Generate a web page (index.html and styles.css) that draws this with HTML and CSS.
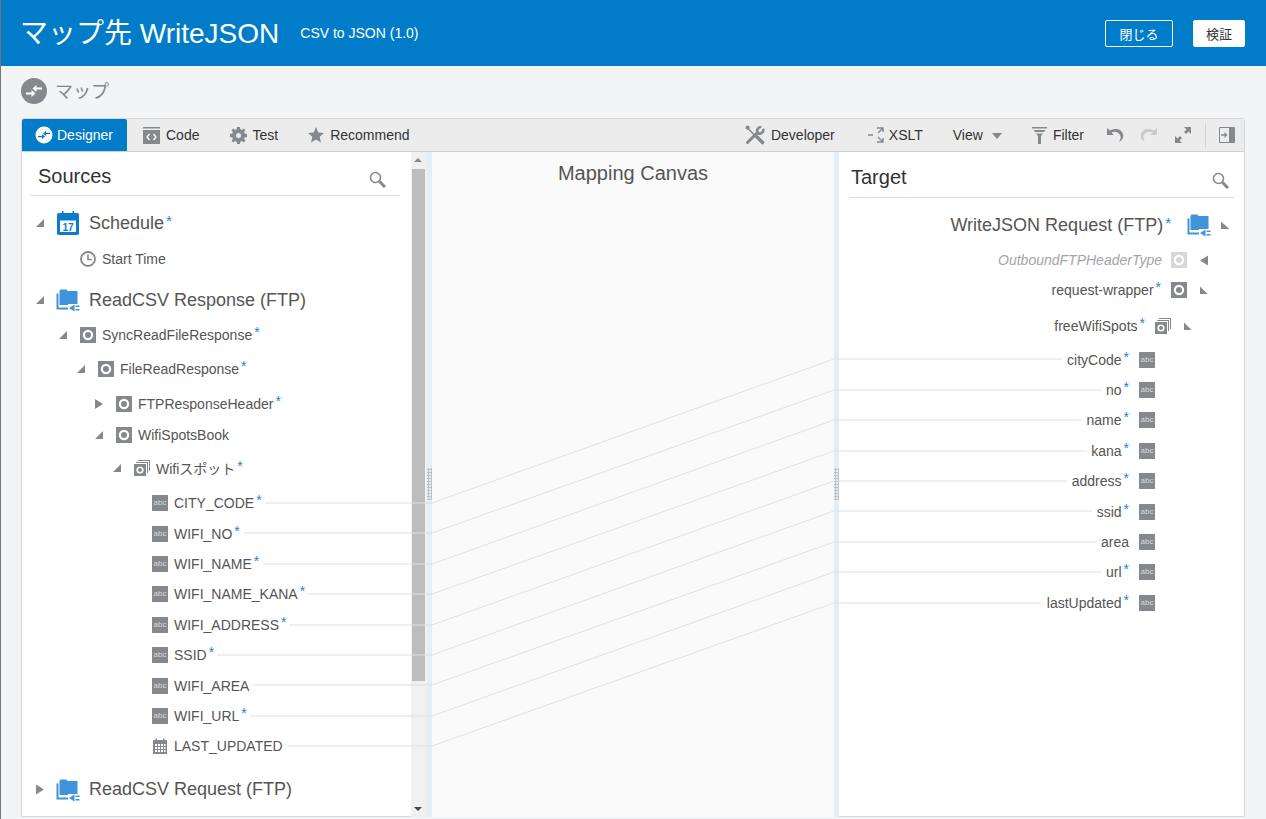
FILE: index.html
```html
<!DOCTYPE html>
<html lang="ja">
  <head>
    <meta charset="UTF-8" />
    <meta name="viewport" content="width=device-width, initial-scale=1.0" />
    <title>マップ先 WriteJSON</title>
    <link rel="stylesheet" href="styles.css">
  </head>
  <body>
    <!-- icon sprites -->
    <svg class="sprites" width="0" height="0">
      <symbol id="i-obj" viewBox="0 0 16 16"><path fill-rule="evenodd" d="M0 0h16v16H0zM8 2.800a5.200 5.200 0 1 0 0 10.400A5.200 5.200 0 0 0 8 2.800zM8 5a3 3 0 1 1 0 6 3 3 0 0 1 0-6z"/></symbol>
      <symbol id="i-coll" viewBox="0 0 16 16"><path fill-rule="evenodd" d="M0 4h12v12H0zM6 6.400a3.600 3.600 0 1 0 0 7.200 3.600 3.600 0 0 0 0-7.200zM6 8a2 2 0 1 1 0 4 2 2 0 0 1 0-4z"/><path d="M2 2h12v11h-1V3H2zM4 0h12v11h-1V1H4z"/></symbol>
      <symbol id="i-folder" viewBox="0 0 24 24"><path fill="#3f94da" d="M3.500 3 4.500 1.500h6L11.500 3H21.500v14H3.500z"/><path fill="none" stroke="#3f94da" stroke-width="2" d="M1.500 5.500V20.500H13"/><path fill="#fff" d="M12 16h12v8H12z"/><path fill="#3f94da" d="M13 20 18.500 16.500v7zM19.500 17.500h4V19h-4zM19.500 21h4v1.500h-4z"/></symbol>
    </svg>

    <header class="app-bar">
      <h1>マップ先 WriteJSON</h1>
      <span class="app-sub">CSV to JSON (1.0)</span>
      <div class="app-actions">
        <button class="btn-line">閉じる</button>
        <button class="btn-solid">検証</button>
      </div>
    </header>

    <div class="crumb">
      <svg class="crumb-icon" viewBox="0 0 26 26"><circle cx="13" cy="13" r="13" fill="#85888c"/><path fill="#fff" d="M5 14.500h5.500V12l4 3.500-4 3.500v-2.500H5zM21 9.500h-5.500V7l-4 3.500 4 3.500v-2.500H21z"/></svg>
      <span class="crumb-label">マップ</span>
    </div>

    <section class="mapper">
      <nav class="toolbar">
        <a class="tool tab-active">
          <svg class="ic" width="18" height="18" viewBox="0 0 18 18"><circle cx="9" cy="9" r="8.500" fill="#fff"/><path fill="#007cc7" d="M3 10h4V8l3 2.500L7 13v-1.800H3zM15 8h-4v2L8 7.500 11 5v1.800h4z"/></svg>
          Designer
        </a>
        <a class="tool">
          <svg class="ic" width="17" height="17" viewBox="0 0 17 17"><path fill="#85888c" d="M0 0h17v1.500H0zM0 3h17v14H0z"/><path fill="none" stroke="#fff" stroke-width="1.300" d="M6.500 7 4 10l2.500 3M10.500 7 13 10l-2.500 3"/></svg>
          Code
        </a>
        <a class="tool tool-test">
          <svg class="ic" width="17" height="17" viewBox="0 0 17 17"><path fill-rule="evenodd" fill="#85888c" d="M7 0h3l.4 2.300 1.500.6L13.800 1.500 15.500 3.200 14.100 5.100l.6 1.500L17 7v3l-2.300.4-.6 1.500 1.400 1.900-1.700 1.700-1.900-1.400-1.500.6L10 17H7l-.4-2.300-1.500-.6-1.900 1.400-1.700-1.700 1.400-1.900-.6-1.500L0 10V7l2.300-.4.6-1.500L1.500 3.200 3.200 1.500 5.100 2.900l1.500-.6zM8.500 6a2.500 2.500 0 1 0 0 5 2.500 2.500 0 0 0 0-5z"/></svg>
          Test
        </a>
        <a class="tool">
          <svg class="ic" width="16" height="16" viewBox="0 0 16 16"><path fill="#85888c" d="m8 0 2.300 5.500 5.700.5-4.300 3.800 1.300 5.700L8 12.500l-5 3 1.300-5.700L0 6l5.700-.5z"/></svg>
          Recommend
        </a>
        <div class="tool-spacer"></div>
        <a class="tool tool-dev">
          <svg class="ic" width="20" height="20" viewBox="0 0 20 20"><path fill="none" stroke="#85888c" stroke-width="1.500" d="M2 2.500 11 11.500"/><path fill="#85888c" d="M1 1 3.500.5 5 3 3 5 .5 3.500z"/><path fill="none" stroke="#85888c" stroke-width="3.600" stroke-linecap="round" d="M12 12 17.500 17.500"/><path fill="none" stroke="#85888c" stroke-width="3" stroke-linecap="round" d="M12.500 7.500 2.500 17.500"/><path fill="none" stroke="#85888c" stroke-width="2.600" d="M18.300 3.800a3.900 3.900 0 0 1-5.400 4.400M12.900 8.200A3.900 3.900 0 0 1 16.300 2"/></svg>
          Developer
        </a>
        <a class="tool tool-xslt">
          <svg class="ic" width="17" height="18" viewBox="0 0 17 18"><path fill="none" stroke="#85888c" stroke-width="1.400" d="M0 9h5M9 2h6v4M15 2l-5 5M9 16h6v-4M15 16l-5-5"/></svg>
          XSLT
        </a>
        <a class="tool tool-view">View <i class="caret"></i></a>
        <a class="tool tool-filter">
          <svg class="ic" width="15" height="17" viewBox="0 0 15 17"><path fill="#85888c" d="M0 0h15v1.500H0zM1.500 3h12L12 5H3zM4 6.500h7L9 9v8H6V9z"/></svg>
          Filter
        </a>
        <svg class="tool-ic undo" width="17" height="14" viewBox="0 0 17 14"><path fill="#85888c" d="M0 0v7h7L4.500 4.500C7 3 12 3.500 13.500 8c.5 2-.5 4-1.500 6 3-1.500 5-4.500 4-8C14.500 1 8.500-.5 3 2.500z"/></svg>
        <svg class="tool-ic redo" width="17" height="14" viewBox="0 0 17 14"><path fill="#c9cbcd" d="M17 0v7h-7l2.500-2.500C10 3 5 3.500 3.500 8c-.5 2 .5 4 1.500 6-3-1.500-5-4.500-4-8C2.500 1 8.500-.5 14 2.500z"/></svg>
        <svg class="tool-ic expand" width="16" height="16" viewBox="0 0 16 16"><path fill="#85888c" d="M9 0h7v7l-2.500-2.500L11 7 9 5l2.500-2.500zM7 16H0V9l2.500 2.500L5 9l2 2-2.500 2.500z"/></svg>
        <div class="tool-sep"></div>
        <svg class="tool-ic panel-ic" width="16" height="16" viewBox="0 0 16 16"><path fill="none" stroke="#85888c" d="M.5.5h15v15H.500z"/><path fill="#85888c" d="M10 1h5v14h-5zM2 7.300h3.500V5l3 3-3 3V8.700H2z"/></svg>
      </nav>

      <div class="mapper-body">
        <div class="sources">
          <div class="pane-head">
            <h2>Sources</h2>
            <svg class="search" width="17" height="17" viewBox="0 0 17 17"><circle cx="6.500" cy="6.500" r="5" fill="none" stroke="#85888c" stroke-width="1.600"/><path stroke="#85888c" stroke-width="3" d="m10.500 10.500 5.500 5.500"/></svg>
          </div>
          <div class="tree">
            <div class="row root d0">
              <i class="tw open"></i>
              <svg class="ic-root" viewBox="0 0 24 24"><path fill="#0a7bd0" d="M3 2h3V0h1.500v2h9V0H18v2h3a2 2 0 0 1 2 2v18a2 2 0 0 1-2 2H3a2 2 0 0 1-2-2V4a2 2 0 0 1 2-2z"/><path fill="#fff" d="M4 9.500h16V21H4z"/><text x="12" y="19.500" class="cal-num">17</text></svg>
              <span class="label">Schedule<sup>*</sup></span>
            </div>
            <div class="row d1 gap-6">
              <svg class="ic" viewBox="0 0 16 16"><circle cx="8" cy="8" r="7" fill="none" stroke="#85888c" stroke-width="1.800"/><path fill="none" stroke="#85888c" stroke-width="1.600" d="M8 3.500V8.500h4"/></svg>
              <span class="label">Start Time</span>
            </div>
            <div class="row root d0 gap-11">
              <i class="tw open"></i>
              <svg class="ic-root"><use href="#i-folder"/></svg>
              <span class="label">ReadCSV Response (FTP)</span>
            </div>
            <div class="row d1 gap-5">
              <i class="tw open"></i>
              <svg class="ic"><use href="#i-obj"/></svg>
              <span class="label">SyncReadFileResponse<sup>*</sup></span>
            </div>
            <div class="row d2 gap-4">
              <i class="tw open"></i>
              <svg class="ic"><use href="#i-obj"/></svg>
              <span class="label">FileReadResponse<sup>*</sup></span>
            </div>
            <div class="row d3 gap-5">
              <i class="tw closed"></i>
              <svg class="ic"><use href="#i-obj"/></svg>
              <span class="label">FTPResponseHeader<sup>*</sup></span>
            </div>
            <div class="row d3 gap-1">
              <i class="tw open"></i>
              <svg class="ic"><use href="#i-obj"/></svg>
              <span class="label">WifiSpotsBook</span>
            </div>
            <div class="row d4 gap-3">
              <i class="tw open"></i>
              <svg class="ic"><use href="#i-coll"/></svg>
              <span class="label">Wifiスポット<sup>*</sup></span>
            </div>
            <div class="row field d5 gap-5"><i class="abc">abc</i><span class="label">CITY_CODE<sup>*</sup></span></div>
            <div class="row field d5"><i class="abc">abc</i><span class="label">WIFI_NO<sup>*</sup></span></div>
            <div class="row field d5"><i class="abc">abc</i><span class="label">WIFI_NAME<sup>*</sup></span></div>
            <div class="row field d5"><i class="abc">abc</i><span class="label">WIFI_NAME_KANA<sup>*</sup></span></div>
            <div class="row field d5"><i class="abc">abc</i><span class="label">WIFI_ADDRESS<sup>*</sup></span></div>
            <div class="row field d5"><i class="abc">abc</i><span class="label">SSID<sup>*</sup></span></div>
            <div class="row field d5"><i class="abc">abc</i><span class="label">WIFI_AREA</span></div>
            <div class="row field d5"><i class="abc">abc</i><span class="label">WIFI_URL<sup>*</sup></span></div>
            <div class="row field d5">
              <svg class="ic" viewBox="0 0 16 16"><path fill-rule="evenodd" fill="#85888c" d="M1 2h2.500V.500H5V2h6V.500h1.500V2H15v14H1zM3 6v2h2V6zm3 0v2h2V6zm3 0v2h2V6zm3 0v2h1.500V6zM3 9v2h2V9zm3 0v2h2V9zm3 0v2h2V9zm3 0v2h1.500V9zM3 12v2h2v-2zm3 0v2h2v-2zm3 0v2h2v-2zm3 0v2h1.500v-2z"/></svg>
              <span class="label">LAST_UPDATED</span>
            </div>
            <div class="row root d0 gap-13">
              <i class="tw closed"></i>
              <svg class="ic-root"><use href="#i-folder"/></svg>
              <span class="label">ReadCSV Request (FTP)</span>
            </div>
          </div>
        </div>

        <div class="scrollbar">
          <i class="sb-up"></i>
          <div class="sb-thumb"></div>
          <i class="sb-down"></i>
        </div>

        <div class="splitter"><div class="grip"></div></div>

        <div class="canvas">
          <div class="canvas-title">Mapping Canvas</div>
        </div>

        <div class="splitter"><div class="grip"></div></div>

        <div class="target">
          <div class="pane-head">
            <h2>Target</h2>
            <svg class="search" width="17" height="17" viewBox="0 0 17 17"><circle cx="6.500" cy="6.500" r="5" fill="none" stroke="#85888c" stroke-width="1.600"/><path stroke="#85888c" stroke-width="3" d="m10.500 10.500 5.500 5.500"/></svg>
          </div>
          <div class="tree tree-right">
            <div class="row root t0">
              <span class="label">WriteJSON Request (FTP)<sup>*</sup></span>
              <svg class="ic-root"><use href="#i-folder"/></svg>
              <i class="tw up"></i>
            </div>
            <div class="row t1 gap-5">
              <span class="label muted">OutboundFTPHeaderType</span>
              <svg class="ic faded"><use href="#i-obj"/></svg>
              <i class="tw left"></i>
            </div>
            <div class="row t1">
              <span class="label">request-wrapper<sup>*</sup></span>
              <svg class="ic"><use href="#i-obj"/></svg>
              <i class="tw up"></i>
            </div>
            <div class="row t2 gap-6">
              <span class="label">freeWifiSpots<sup>*</sup></span>
              <svg class="ic"><use href="#i-coll"/></svg>
              <i class="tw up"></i>
            </div>
            <div class="row field t3 gap-3"><span class="label">cityCode<sup>*</sup></span><i class="abc">abc</i></div>
            <div class="row field t3"><span class="label">no<sup>*</sup></span><i class="abc">abc</i></div>
            <div class="row field t3"><span class="label">name<sup>*</sup></span><i class="abc">abc</i></div>
            <div class="row field t3"><span class="label">kana<sup>*</sup></span><i class="abc">abc</i></div>
            <div class="row field t3"><span class="label">address<sup>*</sup></span><i class="abc">abc</i></div>
            <div class="row field t3"><span class="label">ssid<sup>*</sup></span><i class="abc">abc</i></div>
            <div class="row field t3"><span class="label">area</span><i class="abc">abc</i></div>
            <div class="row field t3"><span class="label">url<sup>*</sup></span><i class="abc">abc</i></div>
            <div class="row field t3"><span class="label">lastUpdated<sup>*</sup></span><i class="abc">abc</i></div>
          </div>
        </div>

        <!-- wires, in page coordinates -->
        <svg class="wires" width="1222" height="665" viewBox="22 152 1222 665">
          <polyline points="265,503 432,503 834,359 1062,359"/>
          <polyline points="244,533 432,533 834,390 1102,390"/>
          <polyline points="263,564 432,564 834,420 1082,420"/>
          <polyline points="308,594 432,594 834,451 1087,451"/>
          <polyline points="289,625 432,625 834,481 1067,481"/>
          <polyline points="217,655 432,655 834,511 1092,511"/>
          <polyline points="252,685 432,685 834,542 1097,542"/>
          <polyline points="250,716 432,716 834,572 1102,572"/>
          <polyline points="287,746 432,746 834,603 1042,603"/>
        </svg>
      </div>
    </section>
  </body>
</html>
```

FILE: styles.css
```css
html, body {
  height: 819px;
  overflow: hidden;
}
body {
  margin: 0;
  border-left: 1px solid #777;
  background-color: #f3f4f6;
  font-family: "Liberation Sans", "Noto Sans CJK JP", Arial, sans-serif;
  color: #555;
}
.sprites {
  position: absolute;
}

/* top bar */
.app-bar {
  display: flex;
  align-items: center;
  height: 66px;
  padding: 0 21px;
  background-color: #007cc8;
  color: #fff;
}
.app-bar h1 {
  margin: -4px 0 0 -2px;
  font-size: 28px;
  font-weight: normal;
}
.app-sub {
  margin-left: 21px;
  font-size: 14px;
}
.app-actions {
  display: flex;
  gap: 20px;
  margin-left: auto;
}
.btn-line,
.btn-solid {
  height: 27px;
  padding: 0;
  border: 1px solid #fff;
  border-radius: 2px;
  font-family: inherit;
  font-size: 13px;
}
.btn-line {
  width: 68px;
  background: transparent;
  color: #fff;
}
.btn-solid {
  width: 52px;
  background-color: #fff;
  color: #333;
}

/* breadcrumb row */
.crumb {
  display: flex;
  align-items: center;
  gap: 8px;
  height: 52px;
  padding: 0 20px 3px;
  box-sizing: border-box;
  color: #85888c;
  font-size: 18px;
}
.crumb-icon {
  width: 26px;
  height: 26px;
}
.crumb-label {
  margin-bottom: 2px;
}

/* main panel */
.mapper {
  width: 1224px;
  height: 699px;
  margin-left: 20px;
  box-sizing: border-box;
  border: 1px solid #d6d7d9;
  border-radius: 3px 3px 0 0;
  background-color: #fff;
}
.toolbar {
  display: flex;
  align-items: center;
  height: 32px;
  border-bottom: 1px solid #cfd0d2;
  background-color: #ececec;
  font-size: 14px;
  color: #333;
}
.tool {
  display: flex;
  align-items: center;
  gap: 6px;
  height: 32px;
  padding: 0 16px;
  box-sizing: border-box;
}
.tab-active {
  width: 105px;
  padding: 0 13px;
  gap: 4px;
  border-radius: 2px 2px 0 0;
  background-color: #007cc8;
  color: #fff;
}
.tab-active + .tool {
  padding-right: 15px;
}
.tool-test {
  gap: 5px;
  padding-right: 14px;
}
.tool-spacer {
  flex: 1;
}
.tool-dev {
  gap: 6px;
  padding: 0 19px 0 0;
}
.tool-xslt {
  gap: 4px;
  padding: 0 14px;
}
.tool-view {
  padding: 0 15px 0 16px;
  gap: 9px;
}
.caret {
  border-left: 5px solid transparent;
  border-right: 5px solid transparent;
  border-top: 6px solid #85888c;
  margin-top: 2px;
}
.tool-filter {
  gap: 6px;
  padding: 0 0 0 15px;
}
.tool-ic {
  flex: none;
}
.undo {
  margin-left: 23px;
}
.redo {
  margin-left: 16px;
}
.expand {
  margin-left: 18px;
}
.tool-sep {
  width: 1px;
  height: 25px;
  margin: 0 13px 0 14px;
  background-color: #d4d5d7;
}
.panel-ic {
  margin-right: 9px;
}

.mapper-body {
  position: relative;
  display: flex;
  height: 665px;
  overflow: hidden;
}
.sources {
  width: 389px;
  flex: none;
}
.target {
  flex: 1;
}
.pane-head {
  display: flex;
  align-items: center;
  justify-content: space-between;
  height: 43px;
  margin: 0 11px 0 8px;
  padding: 0 14px 0 8px;
  border-bottom: 1px solid #d9dbdd;
}
.target .pane-head {
  height: 45px;
  margin: 0 10px;
  padding: 0 5px 0 2px;
}
.pane-head h2 {
  margin: 6px 0 0;
  font-size: 20px;
  font-weight: normal;
  color: #333;
}
.search {
  margin-top: 12px;
}

/* trees */
.tree {
  padding-top: 12px;
}
.tree-right {
  padding-top: 12.4px;
}
.row {
  display: flex;
  align-items: center;
  height: 30px;
  font-size: 14px;
  white-space: nowrap;
}
.field {
  height: 30.4px;
}
.root {
  font-size: 18px;
}
.d0 { padding-left: 14px; }
.d1 { padding-left: 37px; }
.d2 { padding-left: 55px; }
.d3 { padding-left: 73px; }
.d4 { padding-left: 91px; }
.d5 { padding-left: 130px; }
.d1 > .ic:first-child {
  margin-left: 21px;
}
.d0 .tw { margin-right: 12px; }
.gap-1 { margin-top: 1px; }
.gap-3 { margin-top: 3px; }
.gap-4 { margin-top: 4px; }
.gap-5 { margin-top: 5px; }
.gap-6 { margin-top: 6px; }
.gap-11 { margin-top: 11px; }
.gap-13 { margin-top: 13px; }

.tw {
  flex: none;
  width: 8px;
  height: 8px;
  margin-right: 13px;
  background-color: #85888c;
}
.open {
  clip-path: polygon(100% 0, 100% 100%, 0 100%);
}
.up {
  clip-path: polygon(0 0, 100% 100%, 0 100%);
}
.closed {
  height: 10px;
  clip-path: polygon(0 0, 100% 50%, 0 100%);
}
.left {
  height: 10px;
  clip-path: polygon(100% 0, 100% 100%, 0 50%);
}
.ic {
  flex: none;
  width: 16px;
  height: 16px;
  fill: #85888c;
}
.tool .ic {
  width: auto;
  height: auto;
}
.tool-dev .ic {
  width: 20px;
  height: 20px;
}
.faded {
  fill: #d6d7d9;
}
.ic-root {
  flex: none;
  width: 24px;
  height: 24px;
}
.cal-num {
  font-size: 10px;
  font-weight: bold;
  text-anchor: middle;
  fill: #0a7bd0;
}
.abc {
  flex: none;
  width: 16px;
  height: 16px;
  background-color: #85888c;
  color: #d9dadb;
  font-family: "Liberation Sans", sans-serif;
  font-size: 8px;
  font-style: normal;
  line-height: 16px;
  text-align: center;
}
.label {
  margin-left: 6px;
}
.root .label {
  margin-left: 9px;
}
.label sup {
  margin-left: 2px;
  color: #1a86dc;
  font-size: 14px;
  line-height: 0;
  vertical-align: 3px;
}
.root .label sup {
  font-size: 15px;
}
.muted {
  color: #a3a5a8;
  font-style: italic;
}

/* right hand tree runs the other way */
.tree-right .row {
  justify-content: flex-end;
}
.tree-right .label {
  margin: 0 10px 0 0;
}
.tree-right .muted {
  margin-right: 9px;
}
.tree-right .tw {
  margin: 0 0 0 13px;
}
.t0 { padding-right: 14px; }
.t1 { padding-right: 36px; }
.t2 { padding-right: 52px; }
.t3 { padding-right: 89px; }
.t0 .tw { margin-left: 10px; width: 9px; }
.t0 .label { margin-right: 16px; }

/* scrollbar and splitters */
.scrollbar {
  position: relative;
  flex: none;
  width: 16px;
  background-color: #f0f0f0;
}
.sb-thumb {
  position: absolute;
  top: 17px;
  left: 1px;
  width: 13px;
  height: 512px;
  background-color: #bdbdbd;
}
.sb-up,
.sb-down {
  position: absolute;
  left: 3px;
  border-left: 4px solid transparent;
  border-right: 4px solid transparent;
}
.sb-up {
  top: 6px;
  border-bottom: 4px solid #85888c;
}
.sb-down {
  bottom: 6px;
  border-top: 4px solid #444;
}
.splitter {
  position: relative;
  flex: none;
  width: 5px;
  background-color: #e3eef8;
}
.grip {
  position: absolute;
  top: 316px;
  left: 0;
  width: 5px;
  height: 32px;
  background-image: radial-gradient(#bfc1c3 60%, transparent 60%);
  background-size: 3px 3px;
}
.canvas {
  width: 402px;
  flex: none;
  background-color: #fafafa;
}
.canvas-title {
  padding-top: 10px;
  text-align: center;
  font-size: 20px;
  color: #555;
}
.wires {
  position: absolute;
  top: 0;
  left: 0;
  pointer-events: none;
}
.wires polyline {
  fill: none;
  stroke: #d9e2ea;
  stroke-width: 1;
}
```
